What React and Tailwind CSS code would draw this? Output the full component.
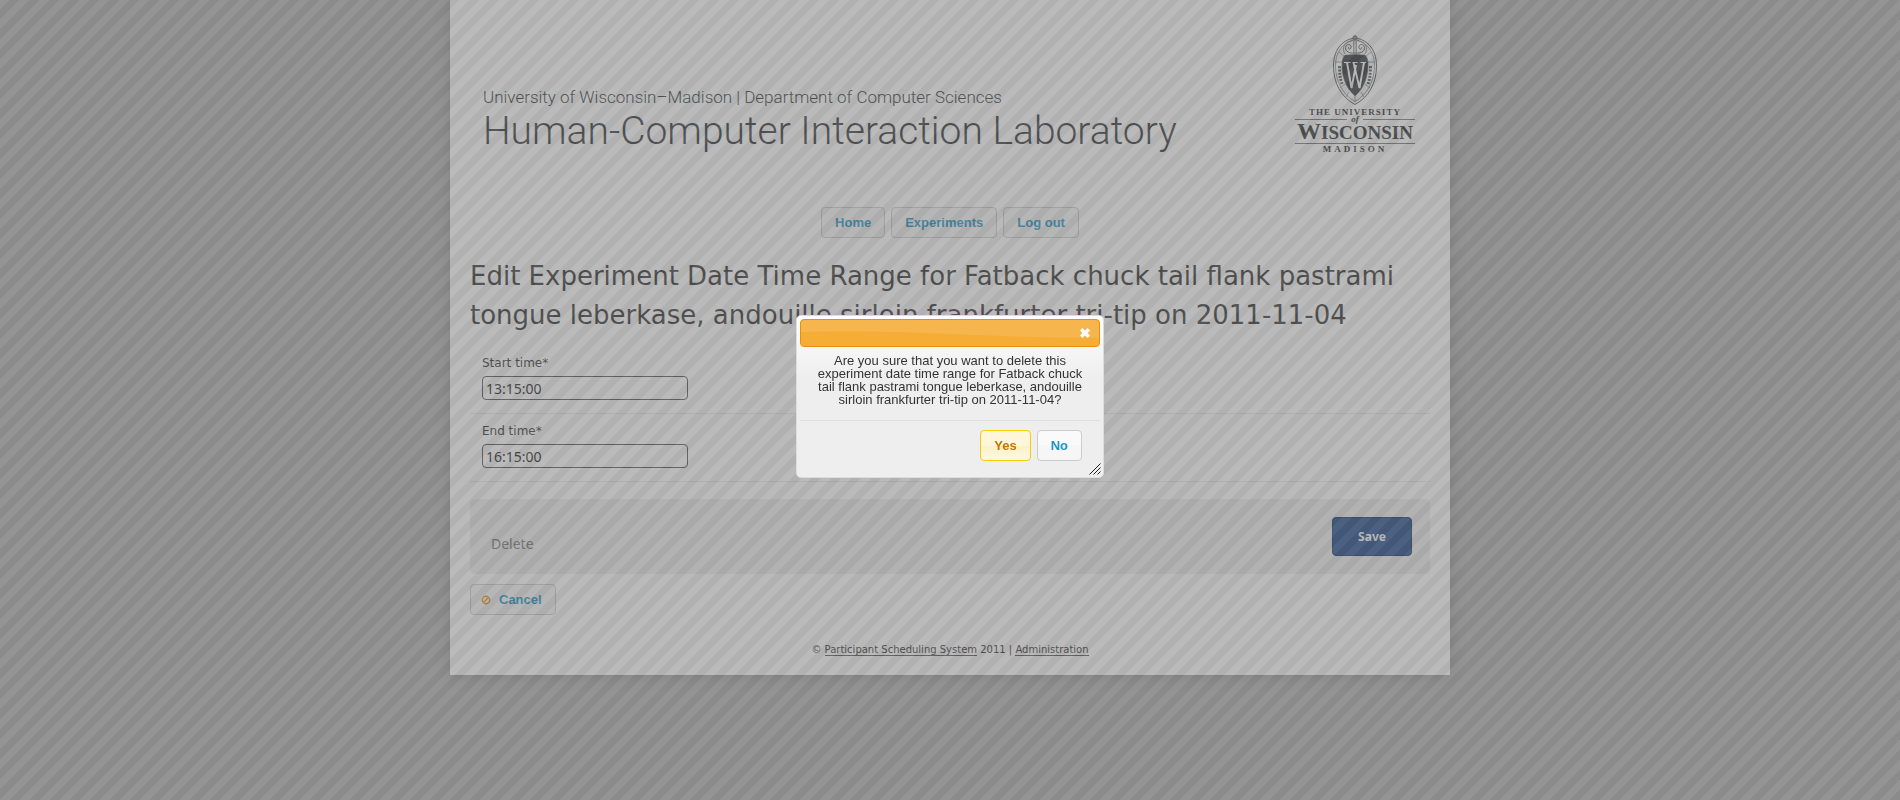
import React from "react";

const navButton =
  "flex h-[31px] items-center rounded border border-[#cccccc] bg-[#f6f6f6] px-[13px] font-['Liberation_Sans',sans-serif] text-[13px] font-bold text-[#1c94c4]";

function Crest() {
  return (
    <svg viewBox="0 0 44 70" className="h-[70px] w-11" fill="none" stroke="#55585a" strokeWidth="0.6" aria-hidden="true">
      <path d="M22 3C32 4 43.500 12 43.500 31 43.500 48 36 62 22 69.500 8 62 0.500 48 0.500 31 0.500 12 12 4 22 3Z" strokeWidth="1" />
      <path d="M22 5C31 6 41.500 14 41.500 31 41.500 46 34 60 22 66.500 10 60 2.500 46 2.500 31 2.500 14 13 6 22 5Z" />
      <circle cx="22" cy="2.800" r="2.200" fill="#8a8c8d" />
      <path d="M18 5H26M22 6V19M20.500 6V18M23.500 6V18" />
      <path d="M22 18C15 19 11 15 13 11 15 8 19 10 18 13 17 15 15 14 15.500 12M22 18C29 19 33 15 31 11 29 8 25 10 26 13 27 15 29 14 28.500 12" strokeWidth="1" />
      <path d="M19 6C12 6 8 13 12 19M25 6C32 6 36 13 32 19" />
      <path d="M6 17 12 22M38 17 32 22M2.500 27H9M35 27H41.500M12 49 7 53M32 49 37 53M22 61V67M16 57 13 62M28 57 31 62" />
      <path d="M6.500 31C6.500 38 7 43 9 49M37.500 31C37.500 38 37 43 35 49" strokeWidth="3" strokeDasharray="2 1.300" />
      <path d="M12 20C18 20 19 19.500 22 19.500S26 20 32 20C34 22 34.500 24 35 27 35.500 42 31 53 22 61 13 53 8.500 42 9 27 9.500 24 10 22 12 20Z" fill="#303336" />
      <path d="M11 27.500H17.500M19.500 27.500H24.500M27.500 27.500H33" stroke="#ffffff" strokeWidth="1.200" />
      <path d="M14 27.500 18.500 53 23 30M20.500 27.500 26.500 53 31 27.500" stroke="#ffffff" strokeWidth="1.900" strokeLinejoin="bevel" />
    </svg>
  );
}

function UniversityMark() {
  return (
    <div className="flex w-[120px] flex-col items-center font-['Liberation_Serif',serif] text-[#2c3033]">
      <Crest />
      <div className="mt-[2px] text-[9px] leading-[10px] font-bold tracking-[1px] whitespace-nowrap">THE UNIVERSITY</div>
      <div className="flex w-full items-center gap-1">
        <span className="h-px flex-1 bg-[#777777]" />
        <span className="text-[9px] leading-[4px] font-bold italic">of</span>
        <span className="h-px flex-1 bg-[#777777]" />
      </div>
      <div className="flex w-full items-baseline justify-center border-b border-[#777777] text-[19px] leading-[20px] font-bold whitespace-nowrap">
        <span className="text-[24px]">W</span><span>ISCONSIN</span>
      </div>
      <div className="text-[9px] leading-[10px] font-bold tracking-[3px]">MADISON</div>
    </div>
  );
}

function TimeField({ id, label, value }) {
  return (
    <div className="border-b border-[#ebebeb] px-3 pt-[6px] pb-[13px]">
      <label htmlFor={id} className="block text-[12px] leading-[22px] text-[#333333]">{label}</label>
      <input
        id={id}
        type="text"
        defaultValue={value}
        className="mt-[2px] block h-6 w-[206px] rounded-[4px] border border-[#555555] bg-transparent px-[3px] font-['Noto_Sans',sans-serif] text-[14px] text-[#222222]"
      />
    </div>
  );
}

function ConfirmDialog() {
  return (
    <div
      role="dialog"
      aria-modal="true"
      aria-label="Confirm"
      className="fixed top-[315px] left-1/2 w-[308px] -translate-x-1/2 rounded-[5px] border border-[#dddddd] bg-[#eeeeee] bg-[linear-gradient(#ffffff_0px,#eeeeee_62px)] p-[3px] font-['Liberation_Sans',sans-serif] text-[13px] text-[#333333]"
    >
      <div className="relative flex h-7 items-center justify-end overflow-hidden rounded border border-[#e78f08] bg-[#f6b54d] pr-[9px]">
        <svg viewBox="0 0 300 28" preserveAspectRatio="none" className="absolute inset-0 h-full w-full" aria-hidden="true">
          <path d="M0 13C120 10 170 19 300 19V28H0Z" fill="#f6ad35" />
        </svg>
        <button type="button" aria-label="Close" className="relative">
          <svg viewBox="0 0 10 10" className="h-[10px] w-[10px]" stroke="#ffffff" strokeWidth="3.400" aria-hidden="true">
            <path d="M1.200 1.200 8.800 8.800M8.800 1.200 1.200 8.800" />
          </svg>
        </button>
      </div>
      <p className="px-[14px] pt-[7px] pb-[14px] text-center leading-[13px]">
        Are you sure that you want to delete this experiment date time range for Fatback chuck tail flank pastrami tongue leberkase, andouille sirloin frankfurter tri-tip on 2011-11-04?
      </p>
      <div className="flex justify-end gap-[6px] border-t border-[#dddddd] pt-[9px] pr-[18px] pb-[13px]">
        <button type="button" className="h-[31px] rounded border border-[#fbcb09] bg-[linear-gradient(#fdf6d8_50%,#fbf1c4_50%,#fdf9e1)] px-[13px] font-bold text-[#c77405]">Yes</button>
        <button type="button" className="h-[31px] rounded border border-[#cccccc] bg-[linear-gradient(#fafafa_50%,#f6f6f6_50%)] px-[13px] font-bold text-[#1c94c4]">No</button>
      </div>
      <svg viewBox="0 0 12 12" className="absolute right-[2px] bottom-[2px] h-3 w-3" stroke="#222222" strokeWidth="1" aria-hidden="true">
        <path d="M0.500 11.500 11.500 0.500M4.500 11.500 11.500 4.500M8.500 11.500 11.500 8.500" />
      </svg>
    </div>
  );
}

export default function App() {
  return (
    <div className="min-h-screen bg-[#b2b2b2] font-['DejaVu_Sans',sans-serif] text-[#333333]">
      <div className="mx-auto max-w-[1000px] bg-white px-5 pb-4 shadow-[0_0_15px_rgba(0,0,0,0.2)]">
        <header className="flex h-[154px] items-start justify-between pt-[35px] pr-[15px] pl-[13px]">
          <div className="pt-[52px] font-['Roboto',sans-serif] font-light text-[#33373a]">
            <div className="text-[17px] leading-[21px]">University of Wisconsin–Madison | Department of Computer Sciences</div>
            <div className="text-[39px] leading-[46px]">Human-Computer Interaction Laboratory</div>
          </div>
          <UniversityMark />
        </header>

        <nav className="mt-[53px] flex justify-center gap-[6px]">
          <a href="#home" className={navButton}>Home</a>
          <a href="#experiments" className={navButton}>Experiments</a>
          <a href="#logout" className={navButton}>Log out</a>
        </nav>

        <h1 className="mt-[19px] text-[26px] leading-[39px]">
          Edit Experiment Date Time Range for Fatback chuck tail flank pastrami tongue leberkase, andouille sirloin frankfurter tri-tip on 2011-11-04
        </h1>

        <form className="mt-[11px]">
          <TimeField id="start-time" label="Start time*" value="13:15:00" />
          <TimeField id="end-time" label="End time*" value="16:15:00" />
          <div className="mt-[17px] flex items-start justify-between rounded-[5px] bg-[#eeeeee] p-[18px]">
            <a href="#delete" className="mt-4 ml-[3px] font-['Noto_Sans',sans-serif] text-[14px] leading-[22px] text-[#777777]">Delete</a>
            <button type="button" className="h-[39px] w-20 rounded border border-[#123466] bg-[#234b8c] font-['Noto_Sans',sans-serif] text-[12px] font-bold text-white">Save</button>
          </div>
        </form>

        <div className="mt-[10px] flex">
          <a href="#cancel" className={navButton + " gap-2 pl-[10px]"}>
            <svg viewBox="0 0 10 10" className="h-[10px] w-[10px]" fill="none" stroke="#ef8c08" strokeWidth="1.400" aria-hidden="true">
              <circle cx="5" cy="5" r="3.700" />
              <path d="M2.600 7.400 7.400 2.600" />
            </svg>
            Cancel
          </a>
        </div>

        <footer className="mt-[26px] text-center text-[10px] leading-[18px]">
          © <a href="#system" className="border-b border-[#555555]">Participant Scheduling System</a> 2011 | <a href="#administration" className="border-b border-[#555555]">Administration</a>
        </footer>
      </div>

      <div className="fixed inset-0 bg-[#777777] bg-[linear-gradient(135deg,#777777_25%,#656565_25%,#656565_50%,#777777_50%,#777777_75%,#656565_75%)] bg-[length:20px_20px] opacity-50" />
      <ConfirmDialog />
    </div>
  );
}
